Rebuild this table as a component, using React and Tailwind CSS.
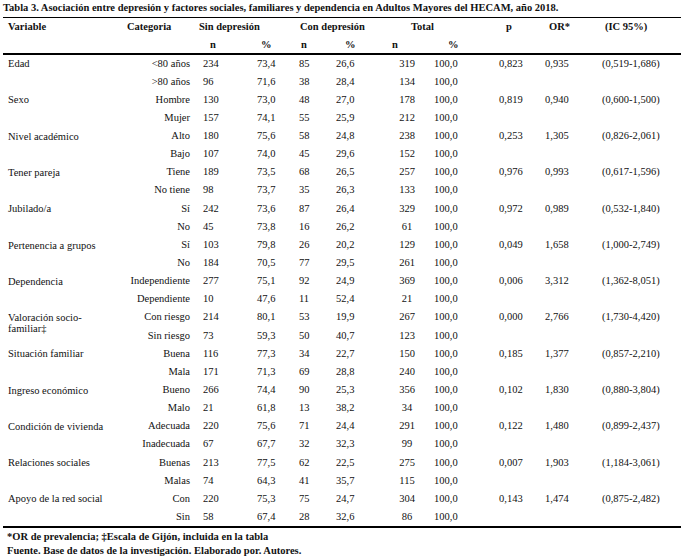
import React from "react";

const rows = [
  ["Edad", [["<80 años","234","73,4","85","26,6","319","100,0","0,823","0,935","(0,519-1,686)"],[">80 años","96","71,6","38","28,4","134","100,0","","",""]]],
  ["Sexo", [["Hombre","130","73,0","48","27,0","178","100,0","0,819","0,940","(0,600-1,500)"],["Mujer","157","74,1","55","25,9","212","100,0","","",""]]],
  ["Nivel académico", [["Alto","180","75,6","58","24,8","238","100,0","0,253","1,305","(0,826-2,061)"],["Bajo","107","74,0","45","29,6","152","100,0","","",""]]],
  ["Tener pareja", [["Tiene","189","73,5","68","26,5","257","100,0","0,976","0,993","(0,617-1,596)"],["No tiene","98","73,7","35","26,3","133","100,0","","",""]]],
  ["Jubilado/a", [["Sí","242","73,6","87","26,4","329","100,0","0,972","0,989","(0,532-1,840)"],["No","45","73,8","16","26,2","61","100,0","","",""]]],
  ["Pertenencia a grupos", [["Sí","103","79,8","26","20,2","129","100,0","0,049","1,658","(1,000-2,749)"],["No","184","70,5","77","29,5","261","100,0","","",""]]],
  ["Dependencia", [["Independiente","277","75,1","92","24,9","369","100,0","0,006","3,312","(1,362-8,051)"],["Dependiente","10","47,6","11","52,4","21","100,0","","",""]]],
  [["Valoración socio-","familiar‡"], [["Con riesgo","214","80,1","53","19,9","267","100,0","0,000","2,766","(1,730-4,420)"],["Sin riesgo","73","59,3","50","40,7","123","100,0","","",""]]],
  ["Situación familiar", [["Buena","116","77,3","34","22,7","150","100,0","0,185","1,377","(0,857-2,210)"],["Mala","171","71,3","69","28,8","240","100,0","","",""]]],
  ["Ingreso económico", [["Bueno","266","74,4","90","25,3","356","100,0","0,102","1,830","(0,880-3,804)"],["Malo","21","61,8","13","38,2","34","100,0","","",""]]],
  ["Condición de vivienda", [["Adecuada","220","75,6","71","24,4","291","100,0","0,122","1,480","(0,899-2,437)"],["Inadecuada","67","67,7","32","32,3","99","100,0","","",""]]],
  ["Relaciones sociales", [["Buenas","213","77,5","62","22,5","275","100,0","0,007","1,903","(1,184-3,061)"],["Malas","74","64,3","41","35,7","115","100,0","","",""]]],
  ["Apoyo de la red social", [["Con","220","75,3","75","24,7","304","100,0","0,143","1,474","(0,875-2,482)"],["Sin","58","67,4","28","32,6","86","100,0","","",""]]],
];

const cellCls = [
  "text-right pr-[3px]",
  "pl-[10px]",
  "pl-[12px]",
  "pl-[9px]",
  "pl-[6px]",
  "text-center pl-[18px]",
  "pl-[16px]",
  "pl-[19px]",
  "pl-[15px]",
  "pl-[12px]",
];

const grid = "grid grid-cols-[117px_73px_52px_45px_40px_48px_40px_62px_50px_60px_91px]";

export default function App() {
  return (
    <div className="w-[684px] h-[556px] bg-white text-[#111] overflow-hidden" style={{ fontFamily: '"Liberation Serif", "Times New Roman", serif' }}>
      <div className="pl-[3px] pr-[3px]">
        <div className="h-[16.5px] text-[10.5px] leading-[16.5px] font-bold whitespace-nowrap">
          Tabla 3. Asociación entre depresión y factores sociales, familiares y dependencia en Adultos Mayores del HECAM, año 2018.
        </div>
        <div className="w-[678px] h-[1.5px] bg-black" />
        <div className={`${grid} auto-rows-[17.5px] text-[10.5px] font-bold leading-[17.5px] whitespace-nowrap`}>
          <div className="pl-[5px]">Variable</div>
          <div className="pl-[7px]">Categoria</div>
          <div className="col-span-2 pl-[6px]">Sin depresión</div>
          <div className="col-span-2 pl-[10px]">Con depresión</div>
          <div className="col-span-2 pl-[33px]">Total</div>
          <div className="pl-[26px]">p</div>
          <div className="pl-[19px]">OR*</div>
          <div className="pl-[15px]">(IC 95%)</div>
          <div />
          <div />
          <div className="pl-[17px]">n</div>
          <div className="pl-[16px]">%</div>
          <div className="pl-[11px]">n</div>
          <div className="pl-[15px]">%</div>
          <div className="pl-[14px]">n</div>
          <div className="pl-[30px]">%</div>
          <div />
          <div />
          <div />
        </div>
        <div className="w-[678px] h-[1.5px] bg-black" />
        <div className={`${grid} auto-rows-[18.15px] text-[10.5px] leading-[18.15px] whitespace-nowrap`}>
          {rows.map(([name, sub]) => (
            <React.Fragment key={Array.isArray(name) ? name.join("") : name}>
              <div className="row-span-2 pl-[5px] pt-[3.6px] leading-[11px]">
                {Array.isArray(name) ? (
                  <>
                    <div>{name[0]}</div>
                    <div>{name[1]}</div>
                  </>
                ) : (
                  name
                )}
              </div>
              {sub.map((r, i) => (
                <React.Fragment key={i}>
                  {r.map((v, j) => (
                    <div key={j} className={cellCls[j]}>{v}</div>
                  ))}
                </React.Fragment>
              ))}
            </React.Fragment>
          ))}
        </div>
        <div className="w-[678px] h-[1.5px] bg-black" />
        <div className="pl-[4px] pt-[2.5px] text-[10.5px] font-bold leading-[14px] whitespace-nowrap">
          <div>*OR de prevalencia; ‡Escala de Gijón, incluida en la tabla</div>
          <div>Fuente. Base de datos de la investigación. Elaborado por. Autores.</div>
        </div>
      </div>
    </div>
  );
}
